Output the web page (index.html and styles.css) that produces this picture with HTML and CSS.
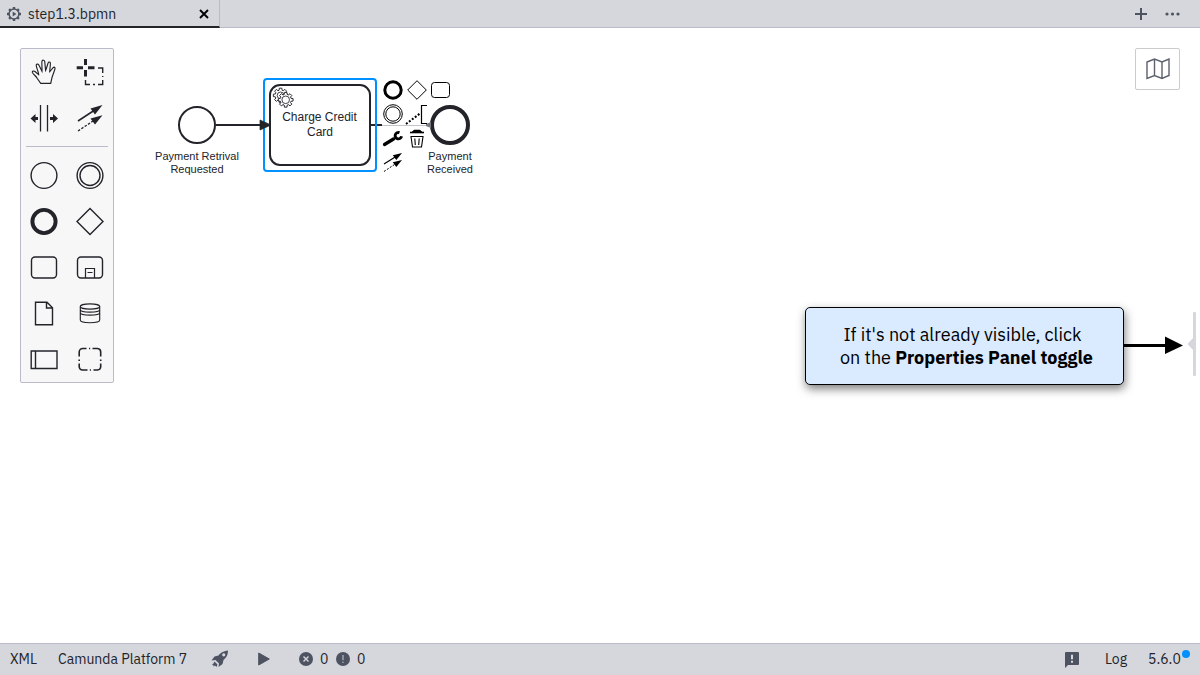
FILE: index.html
```html
<!DOCTYPE html>
<html lang="en">
<head>
<meta charset="utf-8">
<title>step1.3.bpmn</title>
<link rel="stylesheet" href="styles.css">
</head>
<body>
<svg class="defs" aria-hidden="true">
  <defs>
    <path id="gear" d="M4.6-1.3L6.4-1.1V1.1L4.6 1.3 4.17 2.33 5.3 3.75 3.75 5.3 2.33 4.17 1.3 4.6 1.1 6.4H-1.1L-1.3 4.6-2.33 4.17-3.75 5.3-5.3 3.75-4.17 2.33-4.6 1.3-6.4 1.1V-1.1L-4.6-1.3-4.17-2.33-5.3-3.75-3.75-5.3-2.33-4.17-1.3-4.6-1.1-6.4H1.1L1.3-4.6 2.33-4.17 3.75-5.3 5.3-3.75 4.17-2.33Z"/>
  </defs>
</svg>
<header class="tabs">
  <div class="tab">
    <svg class="tab-icon" width="16" height="16" viewBox="-8 -8 16 16" fill="none" stroke="#4d5361"><circle r="4.900" stroke-width="1.500"/><path d="M0-7V-5M0 7V5M-7 0H-5M7 0H5M-4.900-4.900L-3.700-3.700M4.900-4.900L3.700-3.700M-4.900 4.900L-3.700 3.700M4.900 4.900L3.700 3.700" stroke-width="2.400"/><path d="M-1.3-2.6L2.400 0-1.3 2.6Z" fill="#4d5361" stroke="none"/></svg>
    <span class="tab-name">step1.3.bpmn</span>
    <svg class="tab-close" width="10" height="10" viewBox="0 0 10 10"><path d="M1 1L9 9M9 1L1 9" stroke="#000" stroke-width="1.9"/></svg>
  </div>
  <div class="tab-actions">
    <svg width="12" height="12" viewBox="0 0 12 12"><path d="M6 0V12M0 6H12" stroke="#4d5361" stroke-width="2"/></svg>
    <svg width="15" height="4" viewBox="0 0 15 4" fill="#4d5361"><circle cx="2" cy="2" r="1.6"/><circle cx="7.5" cy="2" r="1.6"/><circle cx="13" cy="2" r="1.6"/></svg>
  </div>
</header>
<main class="canvas">
  <svg class="diagram" width="1200" height="615" viewBox="0 28 1200 615">
    <g fill="none" stroke="#22242a">
      <circle cx="197" cy="125" r="18" stroke-width="2"/>
      <path d="M216 125H261M371 125H382" stroke-width="2"/>
      <path d="M382 125.500H430" stroke="#c4c4c8" stroke-width="1"/>
      <rect x="270" y="85" width="100" height="80" rx="10" stroke-width="2"/>
      <rect x="264" y="79" width="112" height="92" rx="3" stroke="#0090ff" stroke-width="2"/>
      <circle cx="450" cy="125" r="18" stroke-width="4"/>
    </g>
    <path d="M260 120L271 125 260 130Z" fill="#22242a" stroke="#22242a" stroke-width=".7"/>
    <path d="M426 124L431 122V128L426 126Z" fill="#777980"/>
    <g fill="#fff" stroke="#22242a" stroke-width=".85">
      <use href="#gear" transform="translate(280.6 95.4) scale(1.13)"/>
      <circle cx="280.6" cy="95.4" r="3.4"/>
      <use href="#gear" transform="translate(285.7 99.8) scale(1.15)"/>
      <circle cx="285.7" cy="99.8" r="3.8"/>
    </g>
    <g class="label">
      <text x="197" y="160">Payment Retrival</text>
      <text x="197" y="173">Requested</text>
      <text x="450" y="160">Payment</text>
      <text x="450" y="173">Received</text>
      <text class="task-label" x="319.5" y="121">Charge Credit</text>
      <text class="task-label" x="320" y="136">Card</text>
    </g>
    <g class="context-pad" fill="none" stroke="#000">
      <circle cx="393" cy="90" r="8.2" stroke-width="3"/>
      <path d="M417 80.7L426.3 90 417 99.300 407.700 90Z"/>
      <rect x="431.500" y="82.500" width="18" height="15" rx="3"/>
      <circle cx="393" cy="114" r="9.300"/>
      <circle cx="393" cy="114" r="7.200"/>
      <path d="M427 105.500H421.500V123.500H427" stroke-width="1.200"/>
      <path d="M406 124L420 113.500" stroke-width="2" stroke-dasharray="2 1.700"/>
      <path d="M384.500 144.500L393.500 139" stroke-width="3.300" stroke-linecap="round"/>
      <path d="M399.500 132.700A3.200 3.200 0 1 0 401.500 136.200" stroke-width="2.900"/>
      <path d="M410 132.500H424" stroke-width="1.600"/>
      <path d="M412 132L414 130H420L422 132Z" fill="#000" stroke-width=".5"/>
      <path d="M411 136.500H423L421.500 147H412.500ZM414.800 138.500L415.300 145M419.200 138.500L418.700 145" stroke-width="1.100"/>
      <path d="M384 164L396 156.500" stroke-width="1.200"/>
      <path d="M402 153L392.800 155.200 396.300 160ZM402 160L392.800 162.200 396.300 167Z" fill="#000" stroke="none"/>
      <path d="M384 171.500L396 163.500" stroke-dasharray="2 1.500"/>
    </g>
  </svg>

  <div class="palette">
    <svg viewBox="21 49 46 46"><path d="M40.700 83.300L37.300 78.500C36 76 33.600 74.700 32.400 72.500 31.900 71 34 70.600 35 71.500L38.700 74.700C39 73 35.800 66.500 36.300 64.800 36.800 63.500 38.500 64 39 65.300L42 71.300C42.300 69 41.500 62.500 42 61 42.700 59.800 44.400 60 44.700 61.300L45.600 70.500C46.600 69 47.500 63.500 48.400 62.300 49.500 61.500 50.700 62.500 50.400 64L49.700 71.700C50.800 71 52.500 67.800 53.600 67.200 55 67 55.300 68.300 54.800 69.500L52 77.500 50.700 83.300Z" stroke-width="1.150"/></svg>
    <svg viewBox="67 49 46 46"><path d="M85.500 59V65M85.500 70V76.500M76.700 67.700H83M88 67.700H94.500" stroke-width="3"/><path d="M98 68H102.700V73M102.700 76V77M102.700 80V84.500H98M95 84.500H93M90 84.500H85.500V80" stroke-width="1.400"/></svg>
    <svg viewBox="21 95 46 46"><path d="M40.500 105V131.500M47.500 105V131.500" stroke-width="1.300"/><path d="M30.500 118.500L35.500 114V117H38V120H35.500V123ZM58 118.500L53 114V117H50V120H53V123Z" fill="#22242a" stroke="none"/></svg>
    <svg viewBox="67 95 46 46"><path d="M78 121L94 110.500" stroke-width="1.500"/><path d="M102.500 105L90.500 108.500 95 114.500ZM102.500 115.300L90.500 118.500 95 124.500Z" fill="#22242a" stroke="none"/><path d="M78 131L93 121" stroke-width="1.300" stroke-dasharray="2.500 1.500"/></svg>
    <hr class="separator">
    <svg viewBox="21 152 46 46"><circle cx="44" cy="175.500" r="12.900"/></svg>
    <svg viewBox="67 152 46 46"><circle cx="90" cy="175.500" r="12.900"/><circle cx="90" cy="175.500" r="10"/></svg>
    <svg viewBox="21 198 46 46"><circle cx="44" cy="221.500" r="11.600" stroke-width="3.900"/></svg>
    <svg viewBox="67 198 46 46"><path d="M90 208.500L103 221.500 90 234.500 77 221.500Z"/></svg>
    <svg viewBox="21 244 46 46"><rect x="31.500" y="257" width="25" height="21" rx="3.500"/></svg>
    <svg viewBox="67 244 46 46"><rect x="77.500" y="257" width="25" height="21" rx="3.500"/><path d="M85.500 278V268.500H94.500V278M87.500 272.500H92.500" stroke-width="1.200"/></svg>
    <svg viewBox="21 290 46 46"><path d="M35.500 302.200H47L52.500 307.700V324.700H35.500ZM46.500 302.500V308H52"/></svg>
    <svg viewBox="67 290 46 46"><g stroke-width="1.150"><ellipse cx="90" cy="306.500" rx="9.700" ry="2.700"/><path d="M80.300 306.500V320C80.300 323.600 99.700 323.600 99.700 320V306.500M80.300 309.500C80.300 313 99.700 313 99.700 309.500M80.300 312.500C80.300 316 99.700 316 99.700 312.500"/></g></svg>
    <svg viewBox="21 336 46 46"><path d="M31.200 351H57V368.500H31.200ZM35.500 351V368.500"/></svg>
    <svg viewBox="67 336 46 46"><path stroke-width="1.600" d="M79.200 356.500V352A3.500 3.500 0 0 1 82.700 348.500H86.500M89 348.500H90.200M92.500 348.500H97.500A3.500 3.500 0 0 1 100.700 352V356.500M100.700 359.500V361M100.700 363.500V367A3.500 3.500 0 0 1 97.500 370H93.500M91 370H89.800M87.500 370H82.700A3.500 3.500 0 0 1 79.200 367V363.500M79.200 361V359.500"/></svg>
  </div>

  <button class="minimap" aria-label="Toggle minimap"><svg width="24" height="22" viewBox="0 0 24 22" fill="none" stroke="#5d616d" stroke-width="1.400"><path d="M1 4L8.500 1 16 4 23 1V17.500L16 20.500 8.500 17.500 1 20.500ZM8.500 1V17.500M16 4V20.500"/></svg></button>

  <div class="hint">
    <p class="hint-box"><span class="line-one">If it's not already visible, click</span><br><span class="line-two">on the <b>Properties Panel toggle</b></span></p>
    <svg class="hint-arrow" width="59" height="18" viewBox="0 0 59 18"><path d="M0 9.500H43" stroke="#000" stroke-width="3"/><path d="M41 0.500L59 9.500 41 18Z"/></svg>
  </div>
  <div class="panel-toggle"><svg width="9" height="64" viewBox="0 0 9 64" fill="#d5d7dd"><rect x="6" width="3" height="64" rx="1"/><path d="M0.500 32L6 26V38Z"/></svg></div>
</main>
<footer class="status">
  <span class="xml">XML</span>
  <span class="platform">Camunda Platform 7</span>
  <svg class="rocket" width="18" height="18" viewBox="0 0 18 18" fill="#4d5361"><path fill-rule="evenodd" d="M17 .5C12 1 9.500 3 7.500 5.500L3.500 6.500 .5 10.500 4.500 10 8 13.500 7.500 17 11.500 14 12.500 10C15.500 7.500 17 5 17 .5ZM12.800 3.200A1.600 1.600 0 1 1 12.700 6.400 1.600 1.600 0 0 1 12.800 3.200Z"/><path d="M3.500 11.500L6.500 14.500 5.500 17 4 15.500 2.500 16.500 2.300 15 .8 14.500 2.300 13.700Z"/></svg>
  <svg class="play" width="12" height="14" viewBox="0 0 12 14"><path d="M.7 1L11.300 7 .7 13Z" fill="#4d5361" stroke="#4d5361" stroke-width="1" stroke-linejoin="round"/></svg>
  <svg class="error" width="14" height="14" viewBox="0 0 14 14"><circle cx="7" cy="7" r="7" fill="#4d5361"/><path d="M4.500 4.500L9.500 9.500M9.500 4.500L4.500 9.500" stroke="#d5d7dd" stroke-width="1.400"/></svg>
  <span class="count">0</span>
  <svg class="warning" width="14" height="14" viewBox="0 0 14 14"><circle cx="7" cy="7" r="7" fill="#4d5361"/><path d="M7 3V8.300M7 9.700V11" stroke="#a9acb5" stroke-width="1.400"/></svg>
  <span class="count">0</span>
  <svg class="feedback" width="14" height="16" viewBox="0 0 14 16"><path d="M1 0H13Q14 0 14 1V12Q14 13 13 13H3L0 16V1Q0 0 1 0Z" fill="#4d5361"/><path d="M7 2.800V7.200M7 8.800V10.800" stroke="#e6e7eb" stroke-width="1.800"/></svg>
  <span class="log">Log</span>
  <span class="version">5.6.0<i class="dot"></i></span>
</footer>
</body>
</html>
```

FILE: styles.css
```css
* { box-sizing: border-box; }

body {
  margin: 0;
  width: 1200px;
  height: 675px;
  display: flex;
  flex-direction: column;
  overflow: hidden;
  background: #fff;
  color: #22242a;
  font-family: "IBM Plex Sans", Roboto, sans-serif;
  font-size: 14px;
}

svg { display: block; flex: none; }
.defs { position: absolute; width: 0; height: 0; }

.tabs {
  height: 28px;
  flex: none;
  display: flex;
  justify-content: space-between;
  background: #d5d7dd;
  border-bottom: 1px solid #b9bbca;
}
.tab {
  width: 220px;
  height: 28px;
  display: flex;
  align-items: center;
  padding: 2px 10px 0 6px;
  border-right: 1px solid #b9bbca;
  border-bottom: 2px solid #22242a;
}
.tab-name { margin-left: 6px; }
.tab-close { margin-left: auto; }
.tab-actions {
  display: flex;
  align-items: center;
  gap: 18px;
  padding-right: 20px;
}

.canvas { flex: 1; position: relative; }
.diagram { position: absolute; left: 0; top: 0; }
.label {
  font: 11px "Liberation Sans", Arial, sans-serif;
  fill: #22242a;
  text-anchor: middle;
}
.task-label { font-size: 12px; }

.palette {
  position: absolute;
  left: 20px;
  top: 20px;
  width: 94px;
  display: grid;
  grid-template-columns: 46px 46px;
  background: #f7f7f8;
  border: 1px solid #b9bbca;
  border-radius: 2px;
}
.palette svg {
  width: 46px;
  height: 46px;
  fill: none;
  stroke: #22242a;
  stroke-width: 1.4;
}
.separator {
  grid-column: 1 / -1;
  width: 82px;
  height: 1px;
  margin: 5px;
  border: 0;
  background: #b9bbca;
}

.minimap {
  position: absolute;
  right: 20px;
  top: 20px;
  width: 45px;
  height: 42px;
  display: grid;
  place-items: center;
  padding: 0;
  background: #fff;
  border: 1px solid #ccc;
  border-radius: 2px;
}

.hint {
  position: absolute;
  left: 805px;
  top: 279px;
  display: flex;
  align-items: center;
  color: #000;
}
.hint-box {
  width: 319px;
  height: 78px;
  margin: 0;
  padding: 15px 0 0 4px;
  background: #daeaff;
  border: 1px solid #000;
  border-radius: 5px;
  box-shadow: 1px 4px 10px rgba(0, 0, 0, .5);
  font-size: 18px;
  line-height: 23px;
  text-align: center;
  white-space: nowrap;
}
.hint-arrow { margin-bottom: 2px; }
.line-one { margin-right: 8px; }
.panel-toggle { position: absolute; right: 4px; top: 284px; }

.status {
  height: 32px;
  flex: none;
  display: flex;
  align-items: center;
  padding: 0 20px 2px 10px;
  background: #d5d7dd;
  border-top: 1px solid #b9bbca;
}
.xml { width: 48px; }
.platform { width: 153px; white-space: nowrap; }
.play { margin-left: 29px; }
.error { margin-left: 29px; }
.count { margin-left: 7px; width: 9px; }
.warning { margin-left: 7px; }
.feedback { margin: 2px 0 0 auto; }
.log { margin-left: 26px; width: 43px; }
.version { position: relative; width: 32px; white-space: nowrap; }
.dot {
  position: absolute;
  right: -10px;
  top: 0;
  width: 8px;
  height: 8px;
  border-radius: 50%;
  background: #0090ff;
}
```
